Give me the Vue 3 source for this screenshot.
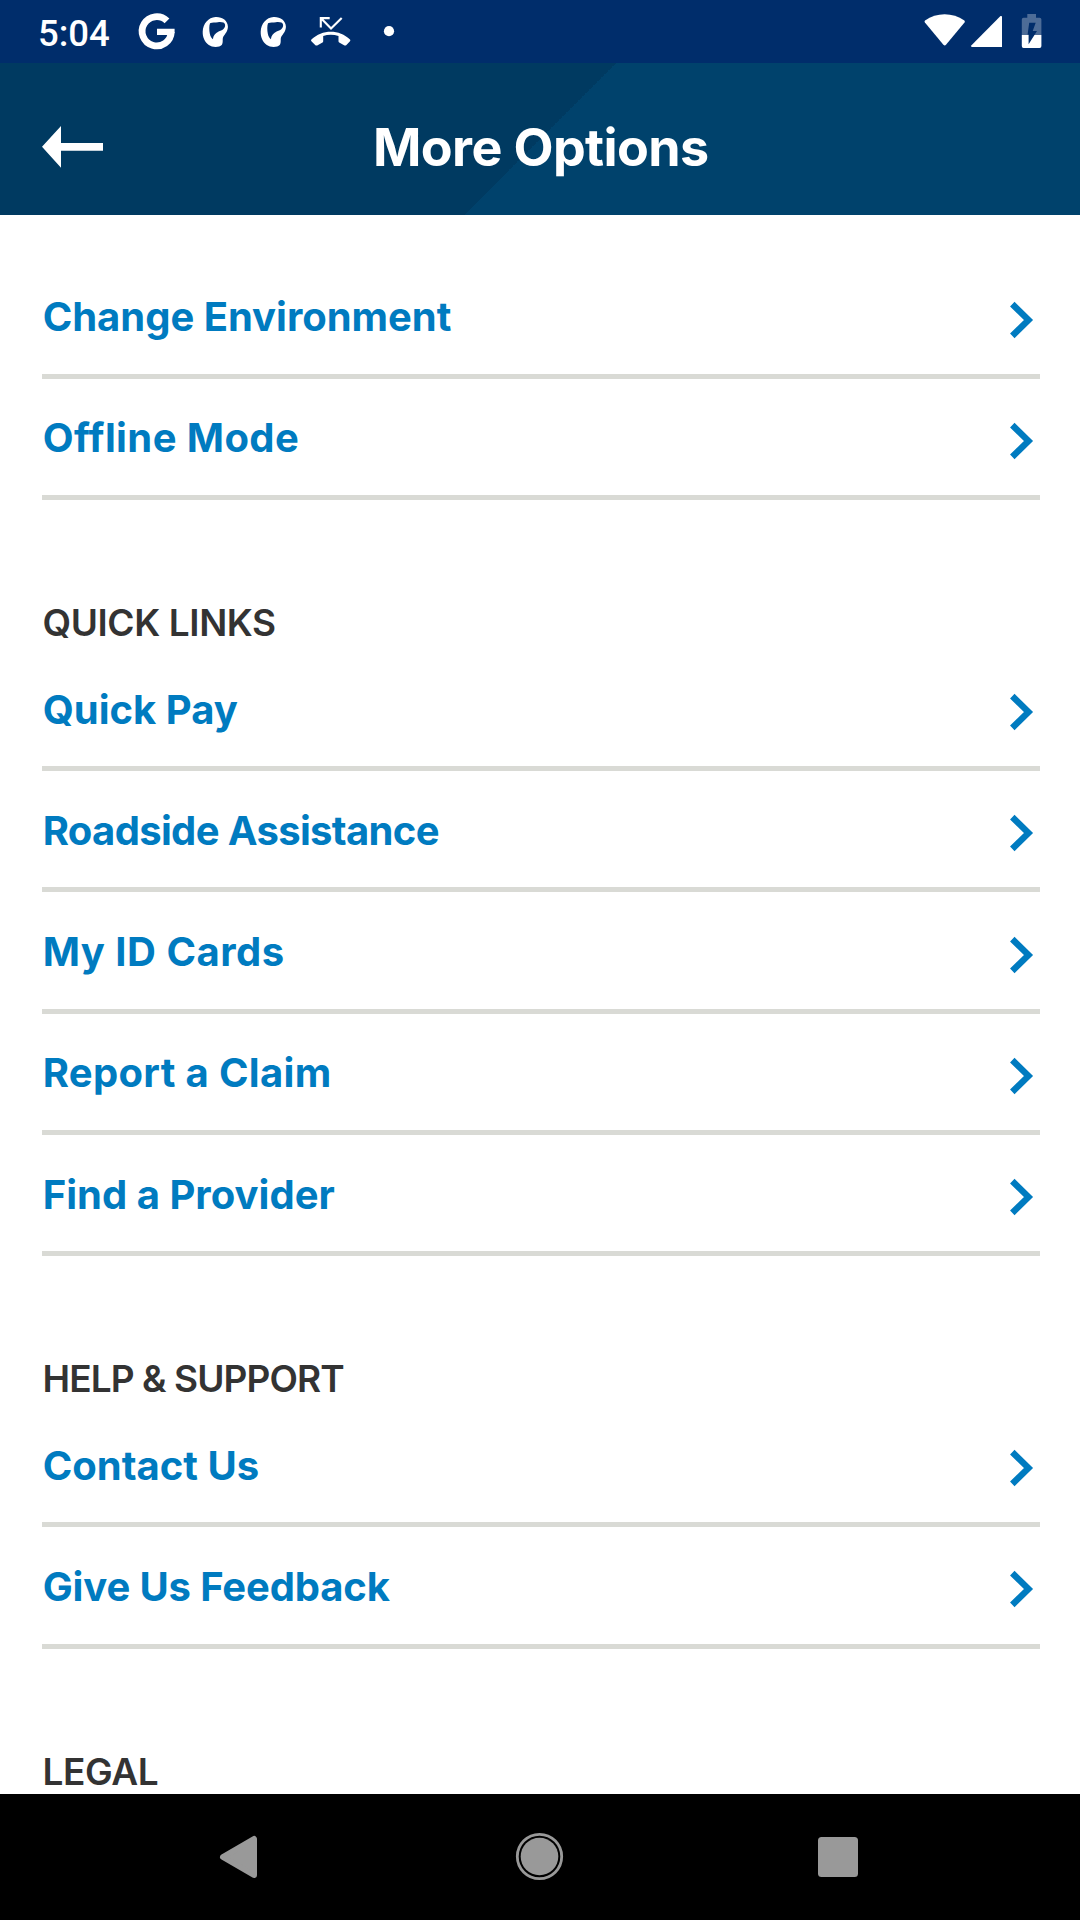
<script setup>
const sections = [
  {
    title: '',
    items: [
      { label: 'Change Environment', tracking: -0.03 },
      { label: 'Offline Mode', tracking: 0.4 },
    ],
  },
  {
    title: 'QUICK LINKS',
    tracking: -0.4,
    items: [
      { label: 'Quick Pay', tracking: 0 },
      { label: 'Roadside Assistance', tracking: -0.66 },
      { label: 'My ID Cards', tracking: 0.48 },
      { label: 'Report a Claim', tracking: 0.33 },
      { label: 'Find a Provider', tracking: 0.02 },
    ],
  },
  {
    title: 'HELP & SUPPORT',
    tracking: -0.91,
    items: [
      { label: 'Contact Us', tracking: 0 },
      { label: 'Give Us Feedback', tracking: -0.14 },
    ],
  },
  { title: 'LEGAL', tracking: -0.4, items: [] },
]
</script>

<template>
  <div class="screen">
    <div class="status">
      <span class="time">5:04</span>
      <svg class="notifications" width="270" height="63" viewBox="130 0 270 63">
        <path d="M167 20.9A14.6 14.6 0 1 0 171.3 32" fill="none" stroke="#fff" stroke-width="6.8" />
        <path d="M157 28.7H174.6V32.5L172.5 35H157Z" fill="#fff" />
        <g v-for="dx in [0, 58]" :key="dx" :transform="`translate(${dx} 0)`">
          <path
            fill="#fff"
            fill-rule="evenodd"
            d="M215.5 17C222 16.6 227.8 20.5 227.9 26.5C228 31 225.2 33.8 223.4 36.5C221.9 39 223.7 42 221.7 45C219.7 47.4 212.5 47.8 208.8 45C204.8 42.2 202.5 37.2 202.7 31.8C203 23.5 208.5 17.4 215.5 17ZM210 23.2C209 25.7 209.2 30.2 209.8 33.5C210.3 36.2 211.5 38.3 212.9 39.3C213.2 36 215.1 33.2 218.6 31.6C222.1 30.3 225.4 28.8 225.1 24.8C224.9 22.2 221.4 21.9 218 22.2C215 22.5 212.5 22.1 210 23.2Z"
          />
        </g>
        <path d="M320.8 27.4V18.1H329.7M320.8 18.1L331 28.6L341.7 17.9" fill="none" stroke="#fff" stroke-width="2.1" />
        <path
          fill="#fff"
          d="M311.4 39.6C322.2 29.1 339.4 29.1 350 39.6Q350.8 40.4 350 41.2L346.2 45.2Q345.4 45.9 344.5 45.4L339.2 42.4Q338.5 42 338.5 41.2V36.1C333.5 34.4 328 34.4 323.2 36.1V41.2Q323.2 42 322.5 42.4L317.2 45.4Q316.2 45.9 315.4 45.2L311.4 41.2Q310.6 40.4 311.4 39.6Z"
        />
        <circle cx="389" cy="31.2" r="5.1" fill="#fff" />
      </svg>
      <svg class="system" width="124" height="63" viewBox="922 0 124 63">
        <path
          fill="#fff"
          d="M925 20.4C936.6 12.1 952.6 12.1 964.4 20.4Q965.3 21.4 964.5 22.5L946 44.8Q944.7 46.3 943.4 44.8L924.9 22.5Q924.1 21.4 925 20.4Z"
        />
        <path d="M1000.5 16.1Q1002 15.4 1002 17V47H972Q970.3 46.7 971.5 45.2Z" fill="#fff" />
        <path
          fill="#fff"
          fill-opacity=".3"
          d="M1027.3 14H1036V17.7H1039.6Q1041.4 17.7 1041.4 19.5V35H1021.8V19.5Q1021.8 17.7 1023.6 17.7H1027.3Z"
        />
        <path d="M1021.8 35H1041.4V46Q1041.4 47.9 1039.6 47.9H1023.6Q1021.8 47.9 1021.8 46Z" fill="#fff" />
        <path d="M1029.2 22.8H1035.7L1032.7 31H1037L1028.6 44.3V34.4H1027.6Z" fill="#002d6b" />
      </svg>
    </div>

    <header class="header">
      <svg class="back" width="61" height="42" viewBox="0 0 61 42">
        <path d="M0 20.7L19 0V17H61V24.7H19V41.7Z" fill="#fff" />
      </svg>
      <h1>More Options</h1>
    </header>

    <main class="content">
      <section v-for="s in sections" :key="s.title">
        <h2 v-if="s.title" :style="{ letterSpacing: s.tracking + 'px' }">{{ s.title }}</h2>
        <a v-for="item in s.items" :key="item.label" class="row">
          <span :style="{ letterSpacing: item.tracking + 'px' }">{{ item.label }}</span>
          <svg width="24" height="38" viewBox="0 0 24 38">
            <path d="M2.3 3.1L18.5 19L2.3 34.9" fill="none" stroke="#007bc0" stroke-width="6.4" />
          </svg>
        </a>
      </section>
    </main>

    <nav class="navbar">
      <svg width="1080" height="126" viewBox="0 1794 1080 126">
        <path d="M223 1857L254 1839V1875Z" fill="#999" stroke="#999" stroke-width="6" stroke-linejoin="round" />
        <circle cx="539.5" cy="1856.5" r="22.2" fill="none" stroke="#999" stroke-width="2.8" />
        <circle cx="539.5" cy="1856.5" r="18.8" fill="#999" />
        <rect x="818" y="1837" width="40" height="40" rx="3.5" fill="#999" />
      </svg>
    </nav>
  </div>
</template>

<style>
body {
  margin: 0;
}
</style>

<style scoped>
.screen {
  display: flex;
  flex-direction: column;
  width: 1080px;
  height: 1920px;
  overflow: hidden;
  background: #fff;
  font-family: Inter, "Liberation Sans", sans-serif;
}
.status {
  display: flex;
  flex: none;
  height: 63px;
  background: #002d6b;
}
.time {
  width: 92px;
  padding-left: 38px;
  color: #fff;
  font: 500 36.5px/67px Roboto, sans-serif;
}
.system {
  margin-left: auto;
  margin-right: 34px;
}
.header {
  display: flex;
  flex: none;
  align-items: center;
  box-sizing: border-box;
  height: 152px;
  padding: 17px 42px 0;
  background: linear-gradient(135deg, #003a61 0 50%, #00426c 50%);
}
.back {
  flex: none;
  margin-bottom: 2px;
}
h1 {
  margin: 0 0 0 270px;
  color: #fff;
  font-size: 52px;
  font-weight: 700;
  line-height: 62px;
  letter-spacing: -0.62px;
}
.content {
  flex: 1;
  min-height: 0;
  overflow: hidden;
  padding: 42.5px 40px 0 42px;
}
h2 {
  box-sizing: border-box;
  height: 149.9px;
  margin: 0;
  padding: 96px 0 0 0.5px;
  color: #333;
  font-size: 37px;
  font-weight: 600;
  line-height: 53.9px;
}
.row {
  display: flex;
  align-items: center;
  justify-content: space-between;
  box-sizing: border-box;
  height: 121.25px;
  padding-right: 6px;
  border-bottom: 5px solid #d9dad5;
  color: #007bc0;
  font-size: 40px;
  font-weight: 700;
  line-height: 48px;
}
.row span {
  padding: 3px 0 0 0.7px;
}
.row svg {
  margin-top: 8px;
}
.navbar {
  flex: none;
  height: 126px;
  background: #000;
}
.navbar svg {
  display: block;
}
</style>
